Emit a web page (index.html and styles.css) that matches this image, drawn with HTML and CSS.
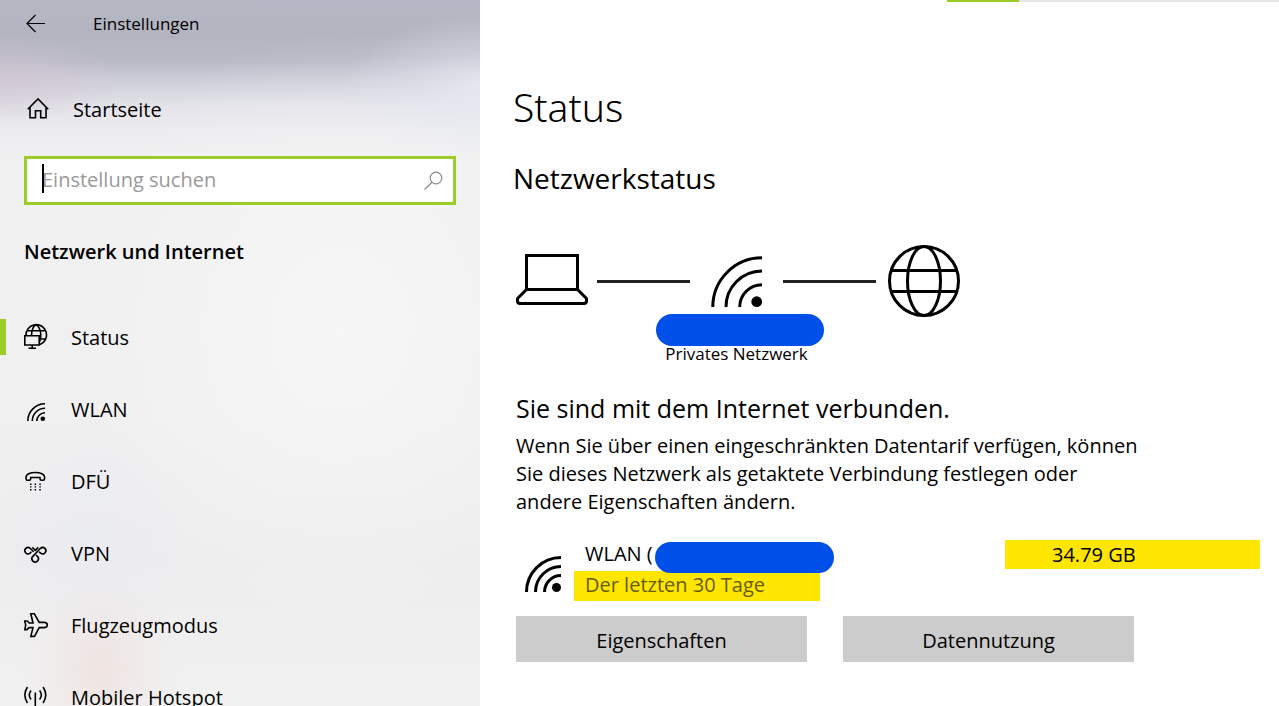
FILE: index.html
```html
<!DOCTYPE html>
<html lang="de">
<head>
<meta charset="utf-8">
<meta name="viewport" content="width=device-width, initial-scale=1">
<title>Einstellungen</title>
<link rel="stylesheet" href="styles.css">
</head>
<body>
<div class="app">
  <aside class="sidebar">
    <header class="titlebar">
      <button class="back" type="button" aria-label="Zurück">
        <svg class="icon thin" viewBox="0 0 24 24"><path d="M21 11.500H3M11.500 3L3 11.500L11.500 20"/></svg>
      </button>
      <span class="app-name">Einstellungen</span>
    </header>
    <a class="home" href="#">
      <svg class="icon" viewBox="0 0 24 24"><path d="M.8 11.300L11 1L21.200 11.300M3 9.500V19.800H8.500V12.700H13.700V19.800H19V9.500"/></svg>
      <span>Startseite</span>
    </a>
    <div class="search">
      <input class="search-input" type="text" placeholder="Einstellung suchen" aria-label="Einstellung suchen">
      <span class="caret"></span>
      <svg class="icon thin search-icon" viewBox="0 0 24 24"><circle cx="15" cy="10" r="5.800"/><path d="M11 14.300L3.500 21.500"/></svg>
    </div>
    <h2 class="section-title">Netzwerk und Internet</h2>
    <nav class="nav">
      <a class="nav-item active" href="#">
        <svg class="icon" viewBox="0 0 24 24"><path d="M2 9.500A10.300 10.300 0 1 1 16 18.500M3.500 4.700H20.500M15.500 13H21.800M7.500 9.500C7.600 4 9.500 -.5 12 -1C14.500 -.5 16.800 4 16.800 9C16.800 12 16.500 14 15.500 16M.8 9.800H15.200V19H.8ZM8.200 19V22M4.500 22.300H12"/></svg>
        <span>Status</span>
      </a>
      <a class="nav-item" href="#">
        <svg class="icon" viewBox="0 0 24 24"><path d="M3.800 23A17.200 17.200 0 0 1 21 5.800M8.300 23A12.700 12.700 0 0 1 21 10.300M12.800 23A8.200 8.200 0 0 1 21 14.800"/><circle class="solid flat" cx="18.800" cy="20.800" r="2.300"/></svg>
        <span>WLAN</span>
      </a>
      <a class="nav-item" href="#">
        <svg class="icon" viewBox="0 0 24 24"><path d="M2 8.500V7C2 4.500 6 2.500 11.300 2.500S20.600 4.500 20.600 7V8.500Q20.600 10.200 19 10.200H17.500Q16 10.200 16 8.700V7.500H6.700V8.700Q6.700 10.200 5.200 10.200H3.500Q2 10.200 2 8.500Z"/><path class="solid flat" d="M6 13.500h1.500V15H6zM10.600 13.500h1.500V15h-1.500zM15.300 13.500h1.500V15h-1.500zM6 16.300h1.500v1.300H6zM10.600 16.300h1.500v1.300h-1.500zM15.300 16.300h1.500v1.300h-1.500zM6 19h1.500v1.500H6zM10.600 19h1.500v1.500h-1.500zM15.300 19h1.500v1.500h-1.500z"/></svg>
        <span>DFÜ</span>
      </a>
      <a class="nav-item" href="#">
        <svg class="icon" viewBox="0 0 24 24"><path d="M6 11.200A3.200 3.200 0 1 1 6.200 6.300L9.600 9.800M8.300 5.400L11.300 8.400L14.300 5.400M6 11.200L7.400 9.800M8.600 14.600L16.500 6.300A3.200 3.200 0 1 1 16.700 11.200L15 9.800M8.600 14.600A3.300 3.300 0 1 0 13.700 14.600L12 13"/></svg>
        <span>VPN</span>
      </a>
      <a class="nav-item" href="#">
        <svg class="icon" viewBox="0 0 24 24"><path d="M6.800 -.3H10.300L15.200 8.400H20.500Q23.300 8.800 23.300 11T20.500 13.600H15.200L10.500 22.400H6.800L9 13.600H5L3 15.600H.8L1.700 11L.8 7H3.300L5.200 9H9Z"/></svg>
        <span>Flugzeugmodus</span>
      </a>
      <a class="nav-item" href="#">
        <svg class="icon" viewBox="0 0 24 24"><path d="M3.500 1Q-1.800 9 3.500 17M7 4.500Q3.500 9 7 13.500M15.600 4.500Q19.100 9 15.600 13.500M19.100 1Q24.400 9 19.100 17M11.300 6.500V24"/></svg>
        <span>Mobiler Hotspot</span>
      </a>
    </nav>
  </aside>

  <main class="main">
    <div class="loading" role="progressbar" aria-label="Laden"><div class="loading-bar"></div></div>
    <h1 class="page-title">Status</h1>
    <h2 class="subtitle">Netzwerkstatus</h2>

    <div class="diagram">
      <svg class="art laptop" viewBox="0 0 72 72"><path d="M10.500 45V10.500H61.500V45M10.500 44.500H61.500L70.500 53.500V56Q70.500 58.500 68 58.500H4Q1.500 58.500 1.500 56V53.500Z"/></svg>
      <span class="link-line"></span>
      <svg class="art wifi-large" viewBox="0 0 51 51"><path d="M1.800 51A49.200 49.200 0 0 1 51 1.800M15 51A36 36 0 0 1 51 15M28.700 51A22.300 22.300 0 0 1 51 28.700"/><circle class="solid flat" cx="45.700" cy="45.700" r="5.400"/></svg>
      <span class="link-line"></span>
      <svg class="art globe" viewBox="0 0 72 72"><circle cx="36" cy="36" r="34.500"/><ellipse cx="36" cy="36" rx="16.500" ry="34.500"/><path d="M3.500 25.500H68.500M3.500 46.500H68.500"/></svg>
      <div class="network-label">
        <span class="redacted network-redacted"></span>
        <span class="network-type">Privates Netzwerk</span>
      </div>
    </div>

    <h3 class="connected">Sie sind mit dem Internet verbunden.</h3>
    <p class="hint">Wenn Sie über einen eingeschränkten Datentarif verfügen, können Sie dieses Netzwerk als getaktete Verbindung festlegen oder andere Eigenschaften ändern.</p>

    <div class="usage">
      <svg class="art wifi-medium" viewBox="0 0 36 36"><path d="M1.500 36A34.500 34.500 0 0 1 36 1.500M10.500 36A25.500 25.500 0 0 1 36 10.500M19.500 36A16.500 16.500 0 0 1 36 19.500"/><circle class="solid flat" cx="31.500" cy="31.500" r="4.500"/></svg>
      <div class="usage-text">
        <div class="usage-name">WLAN (<span class="redacted usage-redacted"></span></div>
        <div class="usage-period">Der letzten 30 Tage</div>
      </div>
      <div class="usage-amount">34.79 GB</div>
    </div>

    <div class="actions">
      <button class="action" type="button">Eigenschaften</button>
      <button class="action" type="button">Datennutzung</button>
    </div>
  </main>
</div>
</body>
</html>
```
FILE: styles.css
```css
* { box-sizing: border-box; }

body {
  margin: 0;
  color: #000;
  background: #fff;
  font: 20px/28px "Open Sans", "Noto Sans", sans-serif;
}

h1, h2, h3, p { margin: 0; font-weight: 400; }
a { color: inherit; text-decoration: none; }
button { font: inherit; color: inherit; border: 0; border-radius: 0; padding: 0; }

.app { display: flex; height: 100vh; overflow: hidden; }

.sidebar {
  flex: 0 0 480px;
  display: flex;
  flex-direction: column;
  overflow: hidden;
  background:
    radial-gradient(ellipse 80px 100px at 100px 670px, rgba(238, 222, 218, .7), rgba(238, 222, 218, .25) 55%, rgba(238, 222, 218, 0)),
    radial-gradient(ellipse 100px 120px at 95px 530px, rgba(232, 234, 245, .4), rgba(232, 234, 245, 0)),
    radial-gradient(ellipse 120px 45px at 0 80px, rgba(210, 198, 211, .7), rgba(210, 198, 211, 0)),
    radial-gradient(ellipse 150px 70px at 490px 85px, rgba(234, 238, 244, .8), rgba(228, 233, 242, .4) 50%, rgba(220, 226, 238, 0)),
    radial-gradient(ellipse 260px 300px at 340px 330px, rgba(250, 250, 250, .6), rgba(250, 250, 250, 0)),
    linear-gradient(#b4b7c3 0, #b4b4c1 35px, #b9b9c6 60px, #cfcfda 82px, #e2e2e9 105px, #ececef 130px, #f0f0f1 160px, #f0f0f0 420px, #ededee 560px, #f1f1f1 706px);
}

.icon { flex: none; width: 24px; height: 24px; overflow: visible; fill: none; stroke: #000; stroke-width: 1.6; }
.icon.thin { stroke-width: 1.2; }
.art { display: block; overflow: visible; fill: none; stroke: #000; stroke-width: 3; }
.icon .solid, .art .solid { fill: #000; }
.icon .flat, .art .flat { stroke: none; }

.titlebar { flex: none; display: flex; align-items: center; gap: 45px; height: 48px; padding-left: 24px; }
.back { display: flex; background: none; }
.app-name { font-size: 17px; }

.home { flex: none; display: flex; align-items: center; gap: 22px; height: 48px; margin-top: 38px; padding-left: 27px; }

.search { flex: none; position: relative; display: flex; margin: 22px 24px 0; }
.search-input {
  width: 100%;
  height: 49px;
  padding: 0 48px 2px 15px;
  border: 3px solid #9acd27;
  border-radius: 0;
  outline: 0;
  background: #fff;
  color: #000;
  font: inherit;
}
.search-input::placeholder { color: #999; opacity: 1; }
.caret { position: absolute; left: 18px; top: 8px; width: 2px; height: 29px; background: #000; }
.icon.search-icon { position: absolute; right: 11px; top: 12px; stroke: #888; }

.section-title { flex: none; margin-top: 33px; padding-left: 24px; font-size: 20px; font-weight: 600; }

.nav { margin-top: 36px; }
.nav-item { position: relative; display: flex; align-items: center; gap: 23px; height: 72px; padding-left: 24px; }
.nav-item.active::before { content: ""; position: absolute; left: 0; top: 17px; width: 6px; height: 36px; background: #9acd27; }

.main { flex: 1; min-width: 0; overflow: hidden; padding-left: 36px; }
.loading { width: 332px; height: 2px; margin-left: auto; background: #e5e5e5; }
.loading-bar { width: 72px; height: 2px; background: #9acd27; }

.page-title { margin: 78px 0 0 -3px; font-family: "Noto Sans", "Open Sans", sans-serif; font-size: 39px; line-height: 54px; font-weight: 300; }
.subtitle { margin: 24px 0 0 -3px; font-size: 28px; line-height: 40px; }

.diagram {
  display: grid;
  grid-template-columns: 72px 9px 93px 93px 93px 12px 72px;
  align-items: center;
  margin-top: 47px;
}
.laptop { grid-column: 1; width: 72px; height: 72px; }
.link-line { height: 3px; background: #222; }
.laptop + .link-line { grid-column: 3; }
.wifi-large { grid-column: 4; justify-self: center; width: 51px; height: 51px; }
.wifi-large + .link-line { grid-column: 5; }
.globe { grid-column: 7; width: 72px; height: 72px; }

.network-label { position: relative; grid-column: 3 / 6; padding-top: 26px; text-align: center; }
.redacted { position: absolute; height: 32px; border-radius: 16px; background: #004fe8; }
.network-redacted { left: 59px; top: -3px; width: 168px; }
.network-type { display: block; font-size: 17px; line-height: 22px; }

.connected { margin-top: 25px; font-size: 25px; line-height: 36px; }
.hint { max-width: 624px; margin-top: 6px; }

.usage { display: flex; align-items: flex-start; margin-top: 23px; line-height: 30px; }
.wifi-medium { flex: none; width: 36px; height: 36px; margin: 17px 13px 0 9px; }
.usage-name { position: relative; padding-left: 11px; line-height: 30px; padding-bottom: 2px; }
.usage-redacted { left: 81px; top: 3px; width: 179px; height: 31px; }
.usage-period { width: 246px; padding-left: 11px; background: #ffe600; color: #665c00; line-height: 28px; padding-bottom: 2px; }
.usage-amount { width: 255px; margin: 1px 19px 0 auto; padding-left: 47px; background: #ffe600; line-height: 29px; }

.actions { display: grid; grid-template-columns: 1fr 1fr; gap: 36px; max-width: 618px; margin-top: 15px; }
.action { height: 46px; padding-top: 4px; background: #ccc; }
```
